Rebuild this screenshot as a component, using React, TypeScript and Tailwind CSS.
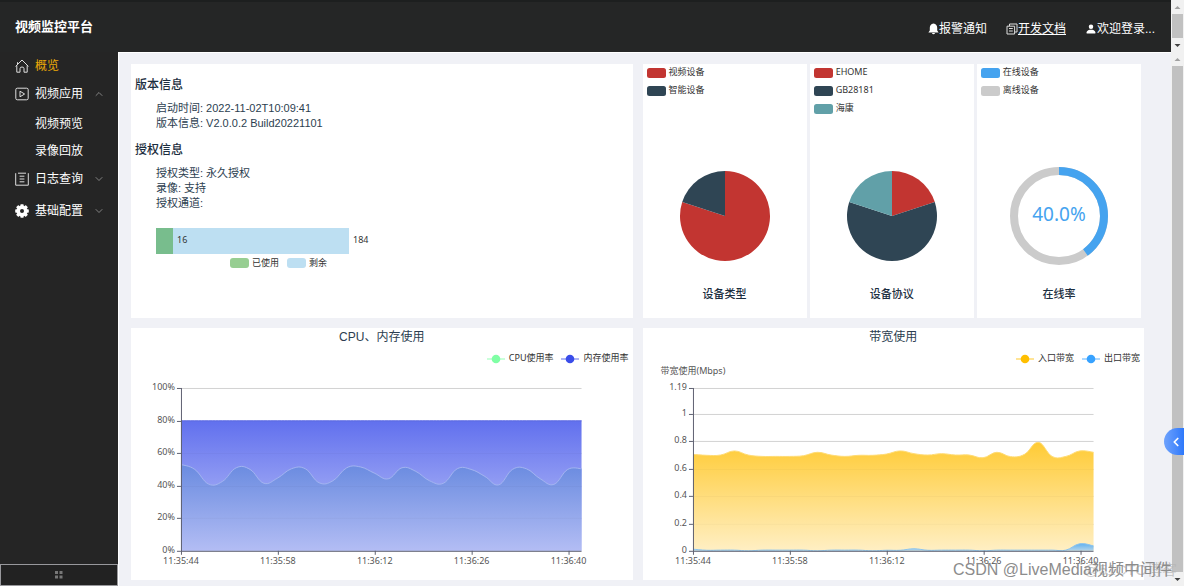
import { useId, type ReactNode } from 'react';
import { BsPersonFill } from 'react-icons/bs';
import { ChevronDown, ChevronLeft, ChevronUp } from 'lucide-react';

type Swatch = { label: string; color: string };
type Slice = Swatch & { value: number };
type Series = {
  name: string;
  values: number[];
  line: string;
  from: string;
  to: string;
};

const RED = '#c23531';
const NAVY = '#2f4554';
const TEAL = '#61a0a8';

const cpu = [
  53, 50, 41, 42.6, 51, 50, 41.5, 44.7, 50.4, 50.4, 41.8, 43, 51, 51.5, 47.7,
  44.2, 51, 48.8, 43, 41.5, 50.4, 50, 45.7, 40.5, 50, 50.4, 44.3, 40.8, 50, 50.4,
];
const memory = cpu.map(() => 80);
const inbound = [
  0.705, 0.698, 0.7, 0.73, 0.7, 0.69, 0.69, 0.69, 0.695, 0.72, 0.7, 0.69, 0.698, 0.698, 0.707,
  0.73, 0.71, 0.7, 0.71, 0.7, 0.7, 0.68, 0.72, 0.688, 0.705, 0.793, 0.69, 0.69, 0.73, 0.72,
];
const outbound = [
  0.012, 0.004, 0.005, 0.005, 0, 0.005, 0.005, 0.005, 0.005, 0, 0.005, 0.005, 0.005, 0, 0.004,
  0.004, 0.015, 0.004, 0.005, 0.005, 0.005, 0, 0.005, 0.005, 0.005, 0.005, 0.005, 0.005, 0.052, 0.036,
];
const times = ['11:35:44', '11:35:58', '11:36:12', '11:36:26', '11:36:40'];

// plot area inside the 502x212 chart
const LEFT = 50;
const RIGHT = 451;
const TOP = 20;
const BOTTOM = 183;

function smoothPath(values: number[], max: number) {
  const step = (RIGHT - LEFT) / (values.length - 1);
  const pts = values.map((v, i) => [LEFT + i * step, BOTTOM - (v / max) * (BOTTOM - TOP)]);
  let d = `M${pts[0][0]} ${pts[0][1]}`;
  for (let i = 0; i < pts.length - 1; i++) {
    const p0 = pts[i - 1] ?? pts[i];
    const p1 = pts[i];
    const p2 = pts[i + 1];
    const p3 = pts[i + 2] ?? p2;
    d += `C${p1[0] + (p2[0] - p0[0]) / 5} ${p1[1] + (p2[1] - p0[1]) / 5} ${p2[0] - (p3[0] - p1[0]) / 5} ${p2[1] - (p3[1] - p1[1]) / 5} ${p2[0]} ${p2[1]}`;
  }
  return d;
}

function AreaChart({ series, max, ticks, unit = '', name }: { series: Series[]; max: number; ticks: number[]; unit?: string; name?: string }) {
  const id = useId();
  const y = (v: number) => Math.round(BOTTOM - (v / max) * (BOTTOM - TOP)) + 0.5;

  return (
    <svg viewBox="0 0 502 212" className="block h-auto w-full overflow-visible font-['Noto_Sans','Noto_Sans_CJK_SC',sans-serif] text-[9px]">
      <defs>
        {series.map((s, i) => (
          <linearGradient key={s.name} id={`${id}-${i}`} x1="0" y1="0" x2="0" y2="1">
            <stop offset="0" stopColor={s.from} />
            <stop offset="1" stopColor={s.to} />
          </linearGradient>
        ))}
      </defs>
      {name && <text x="50" y="6" textAnchor="middle" fill="#555">{name}</text>}
      {ticks.slice(1).map((t) => (
        <line key={t} x1={LEFT} x2={RIGHT} y1={y(t)} y2={y(t)} stroke="#d8d8d8" />
      ))}
      {series.map((s, i) => {
        const d = smoothPath(s.values, max);
        return (
          <g key={s.name}>
            <path d={`${d}V${BOTTOM}H${LEFT}Z`} fill={`url(#${id}-${i})`} />
            <path d={d} fill="none" stroke={s.line} />
          </g>
        );
      })}
      {ticks.slice(1).map((t) => (
        <line key={t} x1={LEFT} x2={RIGHT} y1={y(t)} y2={y(t)} stroke="#000" strokeOpacity="0.03" />
      ))}
      <path d={`M${LEFT}.5 ${TOP}V${BOTTOM}.5H${RIGHT}`} fill="none" stroke="#5d6070" />
      {ticks.map((t) => (
        <g key={t}>
          <line x1={LEFT - 4} x2={LEFT} y1={y(t)} y2={y(t)} stroke="#5d6070" />
          <text x={LEFT - 6} y={y(t) + 2} textAnchor="end" fill="#555">{t}{unit}</text>
        </g>
      ))}
      {times.map((t, i) => (
        <g key={t}>
          <line x1={LEFT + 0.5 + i * 97} x2={LEFT + 0.5 + i * 97} y1={BOTTOM} y2={BOTTOM + 4} stroke="#5d6070" />
          <text x={LEFT + i * 97} y={BOTTOM + 13} textAnchor="middle" fill="#555">{t}</text>
        </g>
      ))}
    </svg>
  );
}

function LineCard({ title, legend, children }: { title: string; legend: Swatch[]; children: ReactNode }) {
  return (
    <section className="bg-white">
      <h2 className="h-[18px] text-center text-xs leading-[18px] text-[#2c3e50]">{title}</h2>
      <ul className="mb-px mt-[3px] flex h-[18px] items-center justify-end gap-2 pr-1 font-['Noto_Sans','Noto_Sans_CJK_SC',sans-serif] text-[9px] text-[#333]">
        {legend.map((l) => (
          <li key={l.label} className="flex items-center gap-1">
            <svg width="18" height="10" viewBox="0 0 18 10" className="mt-px">
              <path d="M0 5H18" stroke={l.color} strokeOpacity="0.55" strokeWidth="1.5" />
              <circle cx="9" cy="5" r="4.3" fill={l.color} />
            </svg>
            {l.label}
          </li>
        ))}
      </ul>
      {children}
    </section>
  );
}

function Legend({ items }: { items: Swatch[] }) {
  return (
    <ul className="flex h-[102px] flex-col pl-1 font-['Noto_Sans','Noto_Sans_CJK_SC',sans-serif] text-[9px] leading-4 text-[#333]">
      {items.map((it) => (
        <li key={it.label} className="flex h-[18px] items-start gap-[3px]">
          <svg width="19" height="18"><rect y="4" width="19" height="10" rx="2.5" fill={it.color} /></svg>
          {it.label}
        </li>
      ))}
    </ul>
  );
}

function PieCard({ title, items, children }: { title: string; items: Swatch[]; children: ReactNode }) {
  return (
    <section className="flex flex-col bg-white pb-[15px]">
      <Legend items={items} />
      <svg width="100" height="100" viewBox="-50 -50 100 100" className="mx-auto block">{children}</svg>
      <h3 className="mt-[19px] text-center text-[11px] font-medium leading-[18px] text-[#1c2e40]">{title}</h3>
    </section>
  );
}

function Pie({ slices }: { slices: Slice[] }) {
  const total = slices.reduce((a, s) => a + s.value, 0);
  let acc = 0;
  const point = (f: number) => `${45 * Math.sin(f * 2 * Math.PI)} ${-45 * Math.cos(f * 2 * Math.PI)}`;
  return (
    <>
      {slices.map((s) => {
        const start = acc / total;
        acc += s.value;
        const large = s.value / total > 0.5 ? 1 : 0;
        return <path key={s.label} d={`M0 0L${point(start)}A45 45 0 ${large} 1 ${point(acc / total)}Z`} fill={s.color} />;
      })}
    </>
  );
}

function ScrollTrack() {
  return (
    <div className="flex w-[13px] shrink-0 flex-col items-center bg-[#f1f1f1]" aria-hidden="true">
      <svg width="13" height="14" viewBox="0 0 13 14"><path d="M3.5 9L6.5 6L9.5 9Z" fill="#a0a0a0" /></svg>
      <div className="w-[11px] flex-1 bg-[#c1c1c1]" />
      <svg width="13" height="14" viewBox="0 0 13 14"><path d="M3.5 6L6.5 9L9.5 6Z" fill="#404040" /></svg>
    </div>
  );
}

const HomeIcon = () => (
  <svg width="14" height="14" viewBox="0 0 14 14" fill="none" stroke="#ddd">
    <path d="M.6 7.4L7 1L13.4 7.4M2.5 3.2V5.4M1.8 6.4V13.2H5V9.6Q5 8 7 8T9 9.6V13.2H12.2V6.4" />
  </svg>
);
const PlayIcon = () => (
  <svg width="14" height="14" viewBox="0 0 14 14" fill="none" stroke="#ddd">
    <rect x=".8" y="1.2" width="12.4" height="11.6" rx="1.5" />
    <path d="M5 4.2V9.8L9.6 7Z" />
  </svg>
);
const LogIcon = () => (
  <svg width="14" height="14" viewBox="0 0 14 14" fill="none" stroke="#ddd">
    <path d="M.7 1.2V13.2H13.3V1.2M3 1.2H11M4.6 4.2H9.4M4.6 7H9.4M4.6 9.8H9.4" />
  </svg>
);
const GearIcon = () => (
  <svg width="14" height="14" viewBox="-7 -7 14 14" fill="#fff">
    {[0, 45, 90, 135].map((a) => (
      <rect key={a} x="-1.7" y="-6.8" width="3.4" height="13.6" rx="0.8" transform={`rotate(${a})`} />
    ))}
    <circle r="5.4" />
    <circle r="2" fill="#252626" />
  </svg>
);
const BellIcon = () => (
  <svg width="11" height="12" viewBox="0 0 11 12" fill="#fff">
    <path d="M5.5.6C3 1 1.8 2.8 1.8 4.8V7.4L.4 9.4H10.6L9.2 7.4V4.8C9.2 2.8 8 1 5.5.6ZM4 10H7Q6.8 11.3 5.5 11.3T4 10Z" />
  </svg>
);
const DocsIcon = () => (
  <svg width="12" height="12" viewBox="0 0 12 12" fill="none" stroke="#ddd">
    <path d="M3.5 3V1H11V9H9M1 3.2H8.6V11H1ZM3 5.5H6.8M3 8H6.8" />
  </svg>
);

function MenuItem({ icon, label, open }: { icon: ReactNode; label: string; open?: boolean }) {
  return (
    <button type="button" aria-expanded={open} className="flex w-full items-center gap-[6px] pl-[15px] pr-[13px] text-left leading-5">
      {icon}
      <span className="flex-1">{label}</span>
      {open ? <ChevronUp size={12} strokeWidth={1.6} color="#999" /> : <ChevronDown size={12} strokeWidth={1.6} color="#999" />}
    </button>
  );
}

function Sidebar() {
  return (
    <aside className="flex w-[118px] shrink-0 flex-col bg-[#252525] text-xs text-white">
      <nav className="flex-1 pt-1">
        <a href="#overview" className="flex items-center gap-[6px] pl-[15px] leading-5 text-[#eda907]">
          <HomeIcon />
          概览
        </a>
        <div className="mt-2"><MenuItem icon={<PlayIcon />} label="视频应用" open /></div>
        <div className="mb-2 mt-[10px] flex flex-col gap-[7px] pl-[35px] leading-5">
          <a href="#preview">视频预览</a>
          <a href="#playback">录像回放</a>
        </div>
        <MenuItem icon={<LogIcon />} label="日志查询" open={false} />
        <div className="mt-3"><MenuItem icon={<GearIcon />} label="基础配置" open={false} /></div>
      </nav>
      <button type="button" aria-label="收起菜单" className="flex h-[22px] items-center justify-center border border-[#98989c] bg-[#222]">
        <svg width="8" height="8" viewBox="0 0 8 8" fill="#777"><path d="M0 0H3V3H0ZM4.5 0H7.5V3H4.5ZM0 4.5H3V7.5H0ZM4.5 4.5H7.5V7.5H4.5Z" /></svg>
      </button>
    </aside>
  );
}

function LicenseCard() {
  return (
    <section className="bg-white pl-1 pt-3 text-[11px] leading-[15px] text-[#2c3e50]">
      <h2 className="text-xs font-medium leading-[18px] text-[#1c2e40]">版本信息</h2>
      <div className="mt-[7px] pl-[21px]">
        <p>启动时间: 2022-11-02T10:09:41</p>
        <p>版本信息: V2.0.0.2 Build20221101</p>
      </div>
      <h2 className="mt-[10px] text-xs font-medium leading-[18px] text-[#1c2e40]">授权信息</h2>
      <div className="mt-[7px] pl-[21px]">
        <p>授权类型: 永久授权</p>
        <p>录像: 支持</p>
        <p>授权通道:</p>
      </div>
      <div className="mt-[17px] pl-[21px] font-['Noto_Sans','Noto_Sans_CJK_SC',sans-serif] text-[9px] text-[#333]">
        <div className="flex h-[26px] leading-6">
          <div className="w-[17px] bg-[#78bd8d]" />
          <div className="w-[176px] bg-[#bddff2] pl-1">16</div>
          <span className="pl-1">184</span>
        </div>
        <ul className="flex items-center gap-2 pl-[74px] leading-[18px]">
          <li className="flex items-center gap-[3px]"><span className="h-[10px] w-[19px] rounded-[3px] bg-[#97ce92]" />已使用</li>
          <li className="flex items-center gap-[3px]"><span className="h-[10px] w-[19px] rounded-[3px] bg-[#bddff2]" />剩余</li>
        </ul>
      </div>
    </section>
  );
}

const deviceTypes: Slice[] = [
  { label: '视频设备', color: RED, value: 8 },
  { label: '智能设备', color: NAVY, value: 2 },
];
const protocols: Slice[] = [
  { label: 'EHOME', color: RED, value: 2 },
  { label: 'GB28181', color: NAVY, value: 6 },
  { label: '海康', color: TEAL, value: 2 },
];
const online: Swatch[] = [
  { label: '在线设备', color: '#45a3ef' },
  { label: '离线设备', color: '#cbcbcb' },
];

export default function App() {
  return (
    <div className="relative flex min-h-screen flex-col overflow-hidden bg-[#f0f1f6] font-['Liberation_Sans','Noto_Sans_CJK_SC',sans-serif]">
      <div className="flex h-[52px]">
        <header className="flex min-w-0 flex-1 items-center justify-between border-t-2 border-[#1d1f1f] bg-[#252626] pl-[15px] pr-4 text-xs text-white">
          <h1 className="text-[13px] font-bold">视频监控平台</h1>
          <div className="flex items-center gap-[19px] pt-[3px]">
            <button type="button" className="flex items-center"><BellIcon />报警通知</button>
            <a href="#docs" className="flex items-center"><DocsIcon /><span className="underline">开发文档</span></a>
            <button type="button" className="flex items-center"><BsPersonFill size={12} />欢迎登录...</button>
          </div>
        </header>
        <ScrollTrack />
      </div>

      <div className="flex flex-1">
        <Sidebar />
        <main className="grid min-w-0 flex-1 grid-cols-2 content-start gap-[10px] border-l border-t border-white pb-[5px] pl-3 pr-[27px] pt-[11px]">
          <LicenseCard />
          <div className="grid grid-cols-3 gap-[3px] pr-[3px]">
            <PieCard title="设备类型" items={deviceTypes}><Pie slices={deviceTypes} /></PieCard>
            <PieCard title="设备协议" items={protocols}><Pie slices={protocols} /></PieCard>
            <PieCard title="在线率" items={online}>
              <g fill="none" strokeWidth="8" transform="rotate(-90)">
                <circle r="45" stroke="#cbcbcb" />
                <circle r="45" stroke="#45a3ef" pathLength="100" strokeDasharray="40 60" />
              </g>
              <text y="5" textAnchor="middle" fill="#45a3ef" className="font-['Noto_Sans',sans-serif] text-[19px]">40.0%</text>
            </PieCard>
          </div>
          <LineCard title="CPU、内存使用" legend={[{ label: 'CPU使用率', color: '#80ffa5' }, { label: '内存使用率', color: '#3a4de9' }]}>
            <AreaChart
              max={100}
              unit="%"
              ticks={[0, 20, 40, 60, 80, 100]}
              series={[
                { name: 'memory', values: memory, line: '#7d88e8', from: '#6170ee', to: '#c4caf8' },
                { name: 'cpu', values: cpu, line: '#a3b4f0', from: '#6a8be0', to: '#b3bdf4' },
              ]}
            />
          </LineCard>
          <LineCard title="带宽使用" legend={[{ label: '入口带宽', color: '#ffbf00' }, { label: '出口带宽', color: '#37a2ff' }]}>
            <AreaChart
              max={1.19}
              ticks={[0, 0.2, 0.4, 0.6, 0.8, 1, 1.19]}
              name="带宽使用(Mbps)"
              series={[
                { name: 'in', values: inbound, line: '#ffdb73', from: '#ffcb35', to: '#ffefc4' },
                { name: 'out', values: outbound, line: '#8cc4ee', from: '#5fb0f0', to: '#b5d6ea' },
              ]}
            />
          </LineCard>
        </main>
        <ScrollTrack />
      </div>

      <button type="button" aria-label="展开" className="absolute right-0 top-[428px] flex h-[27px] w-5 items-center justify-center rounded-l-full bg-gradient-to-r from-[#6ea2fc] to-[#2d78fb] pl-1">
        <ChevronLeft size={14} strokeWidth={3} color="#fff" />
      </button>
      <p className="absolute bottom-1 right-[7px] text-[15px] leading-6 text-[#b4b4b4]/70">@51CTO博客</p>
      <p className="absolute bottom-1 right-3 text-base leading-6 text-[#8c8c8c]">CSDN @LiveMedia视频中间件</p>
    </div>
  );
}
